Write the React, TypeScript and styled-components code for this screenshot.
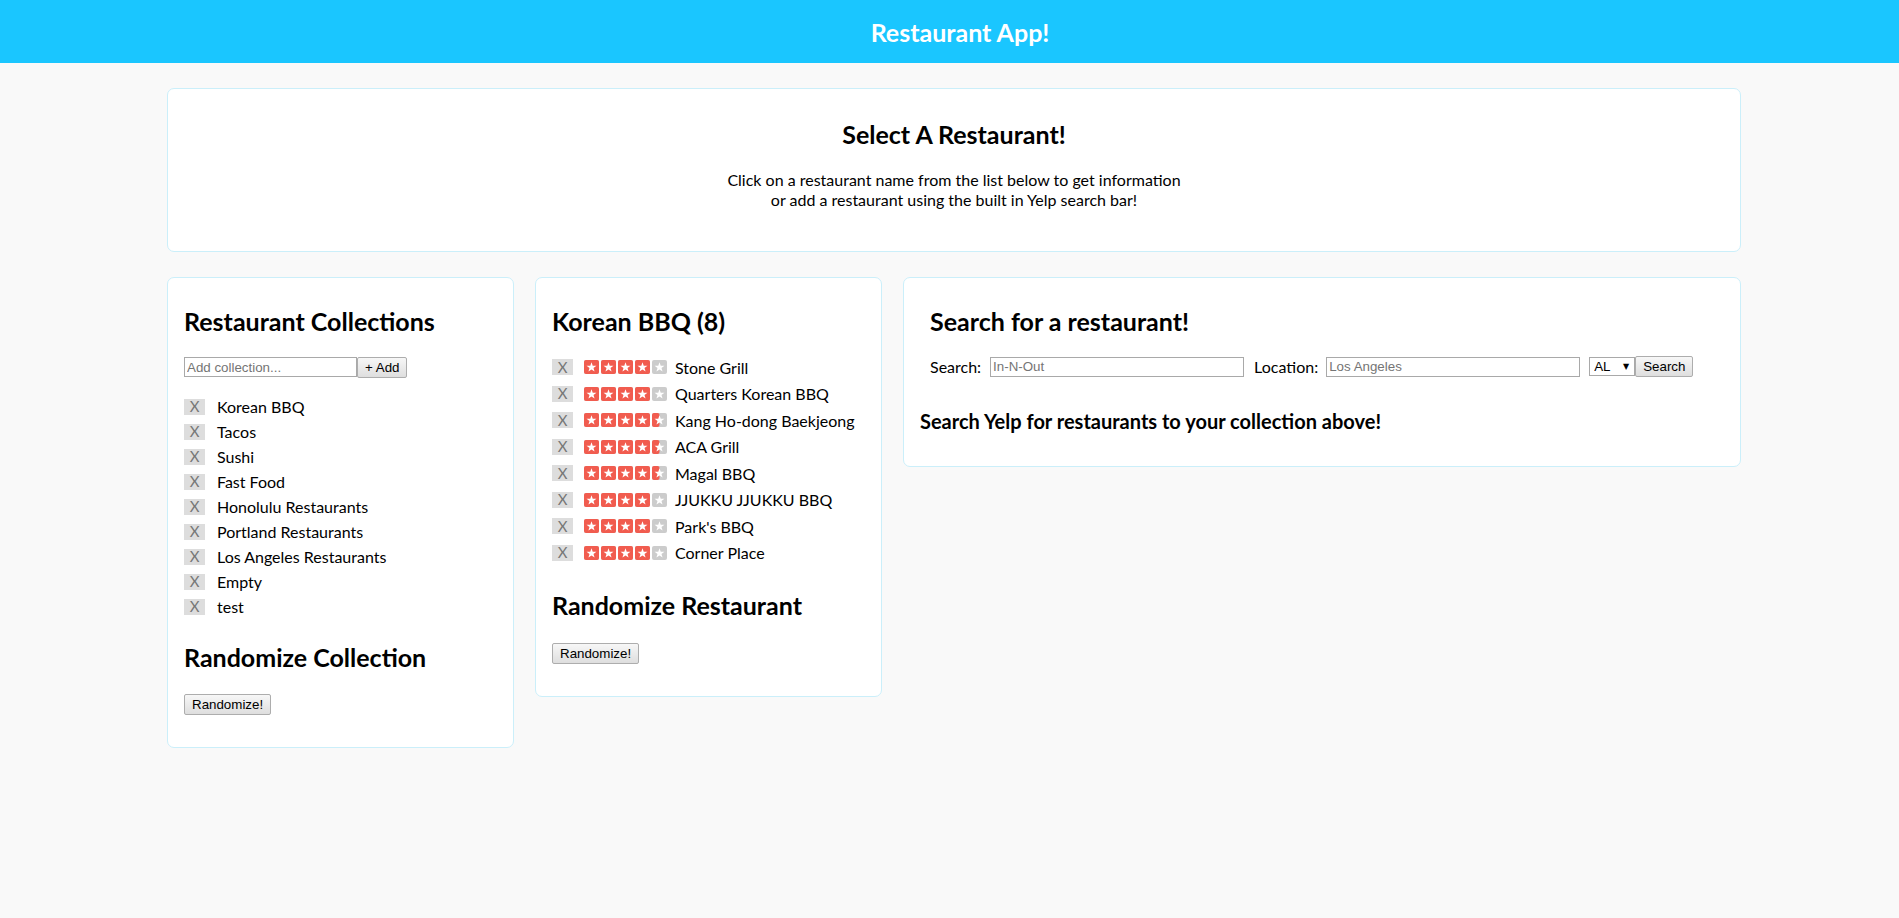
import React from 'react';
import styled, { createGlobalStyle } from 'styled-components';

const FONT = `Lato, "Open Sans", "Liberation Sans", sans-serif`;
const CONTROL_FONT = `"Liberation Sans", Arial, sans-serif`;

const GlobalStyle = createGlobalStyle`
  body {
    margin: 0;
    background: #f9f9f9;
    font-family: ${FONT};
    color: #000;
  }
`;

const Header = styled.header`
  height: 63px;
  background: #1ac6ff;
  display: flex;
  align-items: center;
  justify-content: center;
  padding-left: 21px;
`;

const Title = styled.h1`
  margin: 0;
  color: #fff;
  font-size: 25px;
  font-weight: 700;
`;

const Main = styled.main`
  display: flex;
  flex-direction: column;
  gap: 25px;
  padding: 25px 158px 40px 167px;
`;

const Card = styled.section`
  background: #fff;
  border: 1px solid #cbeffa;
  border-radius: 7px;
`;

const IntroCard = styled(Card)`
  text-align: center;
  padding: 32px 16px 41px;
`;

const IntroTitle = styled.h2`
  margin: 0 0 23px;
  font-size: 25px;
  line-height: 26px;
`;

const IntroText = styled.p`
  margin: 0;
  font-size: 16px;
  line-height: 20px;
`;

const Columns = styled.div`
  display: grid;
  grid-template-columns: 347px 347px 1fr;
  gap: 21px;
  align-items: start;
`;

const Panel = styled(Card)<{ $bottom?: number }>`
  padding: 29px 16px ${(p) => p.$bottom ?? 30}px;
`;

const Heading = styled.h2`
  margin: 0;
  font-size: 25px;
  line-height: 29px;
`;

const SubHeading = styled(Heading)<{ $top: number }>`
  margin-top: ${(p) => p.$top}px;
`;

const AddForm = styled.form`
  display: flex;
  margin: 21px 0 16px;
`;

const TextInput = styled.input<{ $width: number }>`
  box-sizing: border-box;
  width: ${(p) => p.$width}px;
  height: 20px;
  padding: 1px 2px;
  border: 1px solid #a9a9a9;
  font-family: ${CONTROL_FONT};
  font-size: 13.33px;
  &::placeholder {
    color: #757575;
  }
`;

const Button = styled.button`
  box-sizing: border-box;
  height: 21px;
  padding: 0 7px;
  border: 1px solid #adadad;
  border-radius: 2px;
  background: linear-gradient(#f7f7f7, #dedede);
  font-family: ${CONTROL_FONT};
  font-size: 13.33px;
  color: #000;
`;

const ActionButton = styled(Button)<{ $top: number }>`
  display: block;
  margin-top: ${(p) => p.$top}px;
`;

const List = styled.ul<{ $top: number }>`
  list-style: none;
  margin: ${(p) => p.$top}px 0 0;
  padding: 0;
`;

const Row = styled.li<{ $height: number }>`
  display: flex;
  align-items: center;
  height: ${(p) => p.$height}px;
  font-size: 16px;
  white-space: nowrap;
`;

const RemoveBox = styled.span<{ $gap: number }>`
  display: inline-flex;
  align-items: center;
  justify-content: center;
  width: 21px;
  height: 16px;
  margin-right: ${(p) => p.$gap}px;
  background: #dddddd;
  color: #777;
  font-size: 15px;
  line-height: 1;
`;

const Stars = styled.span`
  display: inline-flex;
  gap: 2px;
  margin-right: 8px;
`;

const SearchBlock = styled.div`
  padding-left: 10px;
`;

const SearchForm = styled.form`
  display: flex;
  align-items: center;
  margin-top: 20px;
  font-size: 16px;
`;

const Label = styled.label<{ $gap: number; $lead?: number }>`
  margin-right: ${(p) => p.$gap}px;
  margin-left: ${(p) => p.$lead ?? 0}px;
`;

const SelectWrap = styled.span`
  position: relative;
  display: inline-flex;
  margin-left: 9px;
`;

const StateSelect = styled.select`
  box-sizing: border-box;
  width: 46px;
  height: 19px;
  padding: 0 0 0 4px;
  border: 1px solid #a9a9a9;
  background: #fff;
  appearance: none;
  font-family: ${CONTROL_FONT};
  font-size: 13.33px;
  color: #000;
`;

const Caret = styled.span`
  position: absolute;
  right: 6px;
  top: 0;
  bottom: 0;
  display: flex;
  align-items: center;
  font-family: "DejaVu Sans", sans-serif;
  font-size: 8px;
  pointer-events: none;
`;

const Hint = styled.h3`
  margin: 33px 0 0;
  font-size: 20px;
  line-height: 22px;
`;

const collections = [
  'Korean BBQ',
  'Tacos',
  'Sushi',
  'Fast Food',
  'Honolulu Restaurants',
  'Portland Restaurants',
  'Los Angeles Restaurants',
  'Empty',
  'test',
];

const restaurants = [
  { name: 'Stone Grill', rating: 4 },
  { name: 'Quarters Korean BBQ', rating: 4 },
  { name: 'Kang Ho-dong Baekjeong', rating: 4.5 },
  { name: 'ACA Grill', rating: 4.5 },
  { name: 'Magal BBQ', rating: 4.5 },
  { name: 'JJUKKU JJUKKU BBQ', rating: 4 },
  { name: "Park's BBQ", rating: 4 },
  { name: 'Corner Place', rating: 4 },
];

const STAR_POINTS =
  '7.5,2.2 8.73,5.7 12.45,5.79 9.5,8.05 10.56,11.61 7.5,9.5 4.44,11.61 5.5,8.05 2.55,5.79 6.27,5.7';

const Star = ({ fill }: { fill: number }) => (
  <svg width="15" height="14" viewBox="0 0 15 14">
    <rect width="15" height="14" rx="2" fill="#cccccc" />
    {fill > 0 && (
      <rect width={fill >= 1 ? 15 : 7.5} height="14" rx="2" fill="#f15c4f" />
    )}
    <polygon points={STAR_POINTS} fill="#fff" />
  </svg>
);

const Rating = ({ value }: { value: number }) => (
  <Stars>
    {[0, 1, 2, 3, 4].map((i) => (
      <Star key={i} fill={Math.max(0, Math.min(1, value - i))} />
    ))}
  </Stars>
);

const App = () => (
  <>
    <GlobalStyle />
    <Header>
      <Title>Restaurant App!</Title>
    </Header>
    <Main>
      <IntroCard>
        <IntroTitle>Select A Restaurant!</IntroTitle>
        <IntroText>
          Click on a restaurant name from the list below to get information
          <br />
          or add a restaurant using the built in Yelp search bar!
        </IntroText>
      </IntroCard>
      <Columns>
        <Panel $bottom={32}>
          <Heading>Restaurant Collections</Heading>
          <AddForm onSubmit={(e) => e.preventDefault()}>
            <TextInput $width={173} placeholder="Add collection..." />
            <Button type="submit">+ Add</Button>
          </AddForm>
          <List $top={0}>
            {collections.map((c) => (
              <Row key={c} $height={25}>
                <RemoveBox $gap={12}>X</RemoveBox>
                {c}
              </Row>
            ))}
          </List>
          <SubHeading $top={24}>Randomize Collection</SubHeading>
          <ActionButton $top={22}>Randomize!</ActionButton>
        </Panel>
        <Panel $bottom={32}>
          <Heading>Korean BBQ (8)</Heading>
          <List $top={18}>
            {restaurants.map((r) => (
              <Row key={r.name} $height={26.5}>
                <RemoveBox $gap={11}>X</RemoveBox>
                <Rating value={r.rating} />
                {r.name}
              </Row>
            ))}
          </List>
          <SubHeading $top={25}>Randomize Restaurant</SubHeading>
          <ActionButton $top={23}>Randomize!</ActionButton>
        </Panel>
        <Panel $bottom={34}>
          <SearchBlock>
            <Heading>Search for a restaurant!</Heading>
            <SearchForm onSubmit={(e) => e.preventDefault()}>
              <Label $gap={9}>Search:</Label>
              <TextInput $width={254} placeholder="In-N-Out" />
              <Label $gap={8} $lead={10}>
                Location:
              </Label>
              <TextInput $width={254} placeholder="Los Angeles" />
              <SelectWrap>
                <StateSelect defaultValue="AL">
                  <option value="AL">AL</option>
                  <option value="AK">AK</option>
                  <option value="CA">CA</option>
                </StateSelect>
                <Caret>▼</Caret>
              </SelectWrap>
              <Button type="submit">Search</Button>
            </SearchForm>
          </SearchBlock>
          <Hint>Search Yelp for restaurants to your collection above!</Hint>
        </Panel>
      </Columns>
    </Main>
  </>
);

export default App;
